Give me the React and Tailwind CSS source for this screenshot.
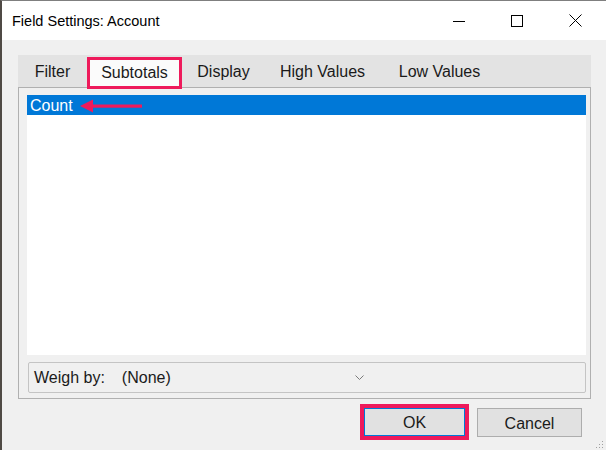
import React from "react";

export default function App() {
  return (
    <div className="w-[606px] h-[450px] relative flex flex-col bg-[#f0f0f0] border-t border-t-[#7f7f7f] border-l-2 border-l-[#4f4a45] font-['Liberation_Sans',Arial,sans-serif] text-black overflow-hidden">
      {/* Title bar */}
      <div className="h-[39px] bg-white flex items-center shrink-0">
        <div className="pl-[10px] text-[14.5px] leading-none pt-[2px]">Field Settings: Account</div>
        <div className="ml-auto flex h-full pr-[2px]">
          <div className="w-[58px] h-full flex items-center justify-center">
            <div className="w-[12px] h-px bg-black mt-[1px]" />
          </div>
          <div className="w-[58px] h-full flex items-center justify-center">
            <div className="w-[12px] h-[12px] border border-black" />
          </div>
          <div className="w-[58px] h-full flex items-center justify-center">
            <svg width="13" height="13" viewBox="0 0 13 13">
              <path d="M0.5 0.5 L12.5 12.5 M12.5 0.5 L0.5 12.5" stroke="#000" strokeWidth="1" fill="none" />
            </svg>
          </div>
        </div>
      </div>

      {/* Body */}
      <div className="flex-1 flex flex-col pt-[15px] pl-[16px]">
        {/* Tab strip */}
        <div className="w-[573px] h-[32px] bg-[#e3e3e3] flex items-start text-[16px] text-[#1a1a1a] shrink-0">
          <div className="w-[69px] h-[32px] flex items-center justify-center pt-[2px]">Filter</div>
          <div className="w-[95px] h-[32px] mt-[2px] relative z-10 border-[3px] border-[#ee1a5b] bg-[#fbfbfb] flex items-center justify-center">
            Subtotals
          </div>
          <div className="w-[83px] h-[32px] flex items-center justify-center pt-[2px]">Display</div>
          <div className="w-[115px] h-[32px] flex items-center justify-center pt-[2px]">High Values</div>
          <div className="w-[119px] h-[32px] flex items-center justify-center pt-[2px]">Low Values</div>
        </div>

        {/* Panel */}
        <div className="w-[573px] h-[312px] border border-[#b0b0b0] bg-[#f0f0f0] pl-[8px] pt-[7px] shrink-0">
          <div className="w-[559px] h-[260px] bg-white">
            <div className="h-[20px] bg-[#0078d7] text-white text-[16px] pl-[3px] pt-[1px] flex items-center">
              <span>Count</span>
              <svg className="ml-[7px]" width="62" height="14" viewBox="0 0 62 14">
                <path d="M0 7 L13 0.5 L13 13.5 Z" fill="#ee1a5b" />
                <rect x="10" y="5.5" width="52" height="3.2" fill="#ee1a5b" />
              </svg>
            </div>
          </div>
          <div className="w-[558px] h-[31px] mt-[7px] ml-[1px] border border-[#c4c4c4] rounded-[2px] bg-[#f0f0f0] flex items-center text-[16px] text-[#1a1a1a] relative pt-[1px]">
            <span className="pl-[5px]">Weigh by:</span>
            <span className="pl-[17px]">(None)</span>
            <svg className="absolute left-[326px] top-[12px]" width="9" height="5" viewBox="0 0 9 5">
              <path d="M0.5 0.5 L4.5 4.5 L8.5 0.5" stroke="#7a7a7a" strokeWidth="1" fill="none" />
            </svg>
          </div>
        </div>

        {/* Buttons */}
        <div className="flex justify-end items-start pr-[24px] mt-[5px] text-[16px] text-[#1a1a1a]">
          <div className="w-[109px] h-[36px] border-[4px] border-[#ee1a5b]">
            <div className="w-full h-full bg-[#e1e1e1] border border-[#0078d7] flex items-center justify-center pt-[2px]">OK</div>
          </div>
          <div className="w-[105px] h-[29px] mt-[4px] ml-[8px] border border-[#adadad] bg-[#e1e1e1] flex items-center justify-center pt-[2px]">
            Cancel
          </div>
        </div>
      </div>

      {/* Resize grip */}
      <svg className="absolute right-[2px] bottom-[1px]" width="9" height="9" viewBox="0 0 9 9">
        <rect x="7" y="1" width="1" height="1" fill="#a0a0a0" />
        <rect x="4" y="4" width="1" height="1" fill="#a0a0a0" />
        <rect x="7" y="4" width="1" height="1" fill="#a0a0a0" />
        <rect x="1" y="7" width="1" height="1" fill="#a0a0a0" />
        <rect x="4" y="7" width="1" height="1" fill="#a0a0a0" />
        <rect x="7" y="7" width="1" height="1" fill="#a0a0a0" />
      </svg>
    </div>
  );
}
